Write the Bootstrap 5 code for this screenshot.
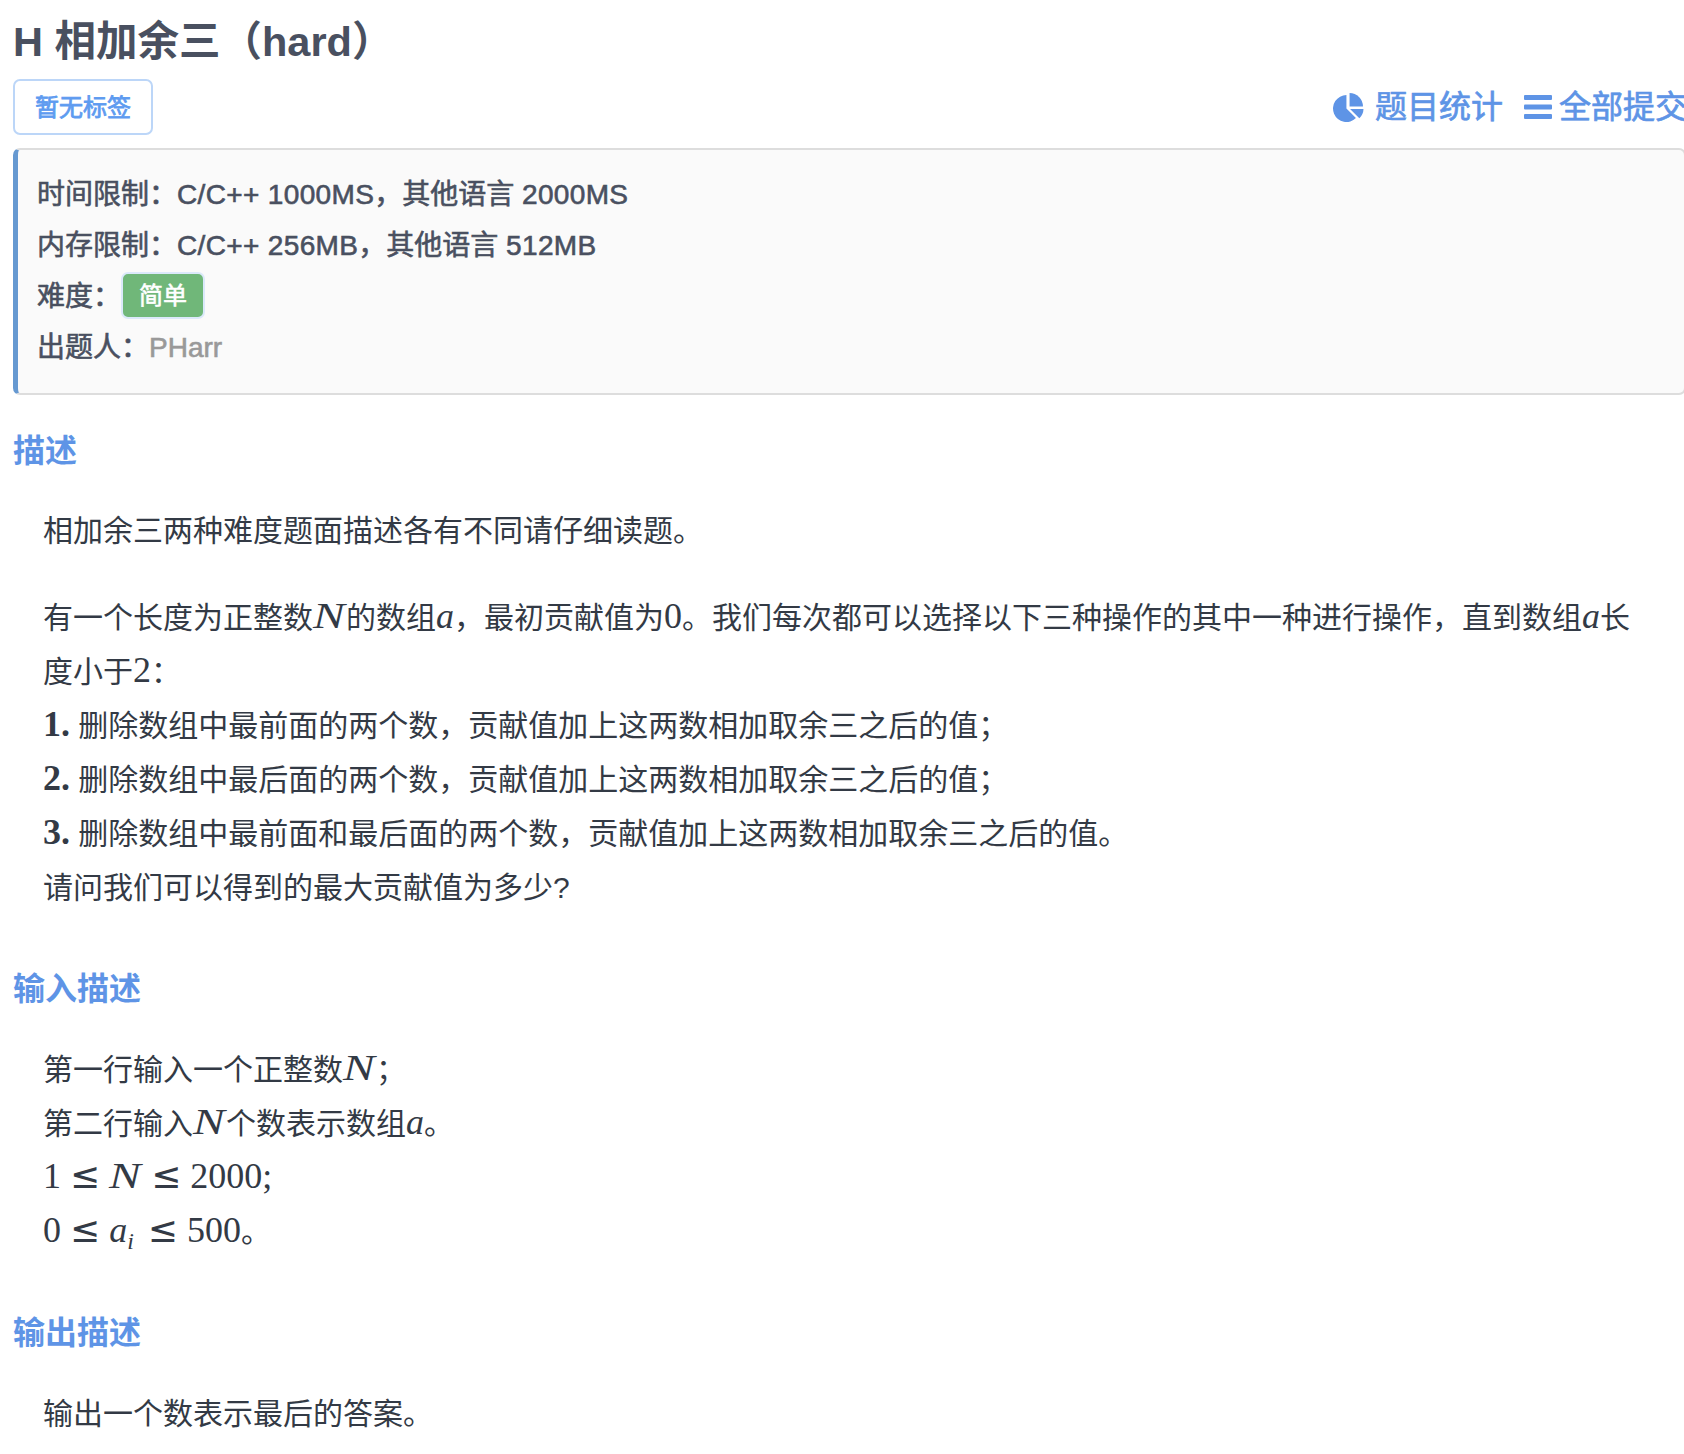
<!DOCTYPE html>
<html lang="zh">
<head>
<meta charset="utf-8">
<title>H 相加余三（hard）</title>
<link href="https://cdn.jsdelivr.net/npm/bootstrap@5.3.0/dist/css/bootstrap.min.css" rel="stylesheet">
<style>
html,body{overflow:hidden;height:1454px}
body{font-family:"Liberation Sans","Noto Sans CJK SC",sans-serif;color:#495060;background:#fff;width:1684px}
.page-wrap{padding:17px 0 0 13px}
.prob-title{font-size:41.5px;line-height:50px;font-weight:700;color:#495060;margin:0 0 12px}
.tag-row{height:56px;margin-bottom:13px;margin-right:-3px}
.empty-tag{font-size:24px;line-height:32px;color:#5e9bf0;border:2px solid #bcd6f8;border-radius:7px;padding:11px 20px 9px;background:#fff;-webkit-text-stroke:.8px #5e9bf0}
.stat-links{font-size:32px;line-height:40px;color:#5e94e6;white-space:nowrap;gap:21px;-webkit-text-stroke:.7px #5e94e6}
.stat-links svg{fill:#5e94e6;flex:none;stroke:none}
.stat-item{gap:11px}
.stat-item+.stat-item{gap:7px}
.info-box{background:#fafafa;border:2px solid #ddd;border-left:5px solid #6699d1;border-radius:7px;padding:19px 19px 15px;height:247px;margin-right:-2px}
.info-line{font-size:28px;line-height:51px;color:#495060;height:51px;white-space:nowrap;-webkit-text-stroke:.6px #495060}
.lat{letter-spacing:.35px}
.level-pill{display:inline-block;background:#70b779;color:#fff;font-size:24px;line-height:43px;height:47px;padding:0 16px;border:2px solid #dbe9fa;border-radius:7px;vertical-align:top;margin-top:1px;-webkit-text-stroke:.6px #fff}
.author{color:#999;-webkit-text-stroke:.6px #999}
.sec-head{font-size:32px;line-height:40px;font-weight:700;color:#5e94e6;margin:0}
.sec-first{margin-top:36px;margin-bottom:33px}
.sec-next{margin-top:54px;margin-bottom:34px}
.sec-body{padding-left:30px;font-size:30px;line-height:54px;color:#333a45;margin:0}
.sec-body p{margin:0 0 33px;padding-right:40px}
.sec-body p:last-child{margin-bottom:0}
.tex{font-family:"Liberation Serif",serif;font-size:36px;line-height:0}
.tex i{font-style:italic}
.tex-b{font-weight:700}
.tex-n{display:inline-block;width:33px;transform:scaleX(1.32);transform-origin:left center}
.tex sub{font-size:24px;line-height:0;bottom:-.3em;margin-right:5px}
.tex-rel{font-family:"DejaVu Sans",sans-serif;margin:0 9px}
</style>
</head>
<body>
<div class="page-wrap">
  <h1 class="prob-title">H 相加余三（hard）</h1>
  <div class="tag-row d-flex justify-content-between align-items-center">
    <span class="empty-tag">暂无标签</span>
    <div class="stat-links d-flex align-items-center">
      <span class="stat-item d-flex align-items-center">
        <svg width="31" height="31" viewBox="0 0 30 30"><path d="M13 3A13 13 0 1 0 22.2 25.2L13 16Z"/><path d="M16 1A13 13 0 0 1 29 14H16Z"/><path d="M16.5 16.5H29.5A13 13 0 0 1 25.5 25.5Z"/></svg>
        题目统计
      </span>
      <span class="stat-item d-flex align-items-center">
        <svg width="28" height="24" viewBox="0 0 28 24"><rect y="0" width="28" height="5" rx="1"/><rect y="9.5" width="28" height="5" rx="1"/><rect y="19" width="28" height="5" rx="1"/></svg>
        全部提交
      </span>
    </div>
  </div>
  <div class="info-box">
    <div class="info-line">时间限制：<span class="lat">C/C++ 1000MS</span>，其他语言 <span class="lat">2000MS</span></div>
    <div class="info-line">内存限制：<span class="lat">C/C++ 256MB</span>，其他语言 <span class="lat">512MB</span></div>
    <div class="info-line">难度：<span class="level-pill">简单</span></div>
    <div class="info-line">出题人：<span class="author">PHarr</span></div>
  </div>

  <h2 class="sec-head sec-first">描述</h2>
  <div class="sec-body">
    <p>相加余三两种难度题面描述各有不同请仔细读题。</p>
    <p>有一个长度为正整数<span class="tex"><i class="tex-n">N</i></span>的数组<span class="tex"><i>a</i></span>，最初贡献值为<span class="tex">0</span>。我们每次都可以选择以下三种操作的其中一种进行操作，直到数组<span class="tex"><i>a</i></span>长度小于<span class="tex">2</span>：<br>
    <span class="tex tex-b">1.</span> 删除数组中最前面的两个数，贡献值加上这两数相加取余三之后的值；<br>
    <span class="tex tex-b">2.</span> 删除数组中最后面的两个数，贡献值加上这两数相加取余三之后的值；<br>
    <span class="tex tex-b">3.</span> 删除数组中最前面和最后面的两个数，贡献值加上这两数相加取余三之后的值。<br>
    请问我们可以得到的最大贡献值为多少?</p>
  </div>

  <h2 class="sec-head sec-next">输入描述</h2>
  <div class="sec-body">
    <p>第一行输入一个正整数<span class="tex"><i class="tex-n">N</i></span>；<br>
    第二行输入<span class="tex"><i class="tex-n">N</i></span>个数表示数组<span class="tex"><i>a</i></span>。<br>
    <span class="tex">1<span class="tex-rel">≤</span><i class="tex-n">N</i><span class="tex-rel">≤</span>2000;</span><br>
    <span class="tex">0<span class="tex-rel">≤</span><i>a</i><sub><i>i</i></sub><span class="tex-rel">≤</span>500</span>。</p>
  </div>

  <h2 class="sec-head sec-next">输出描述</h2>
  <div class="sec-body">
    <p>输出一个数表示最后的答案。</p>
  </div>
</div>
<script src="https://cdn.jsdelivr.net/npm/bootstrap@5.3.0/dist/js/bootstrap.bundle.min.js"></script>
</body>
</html>
